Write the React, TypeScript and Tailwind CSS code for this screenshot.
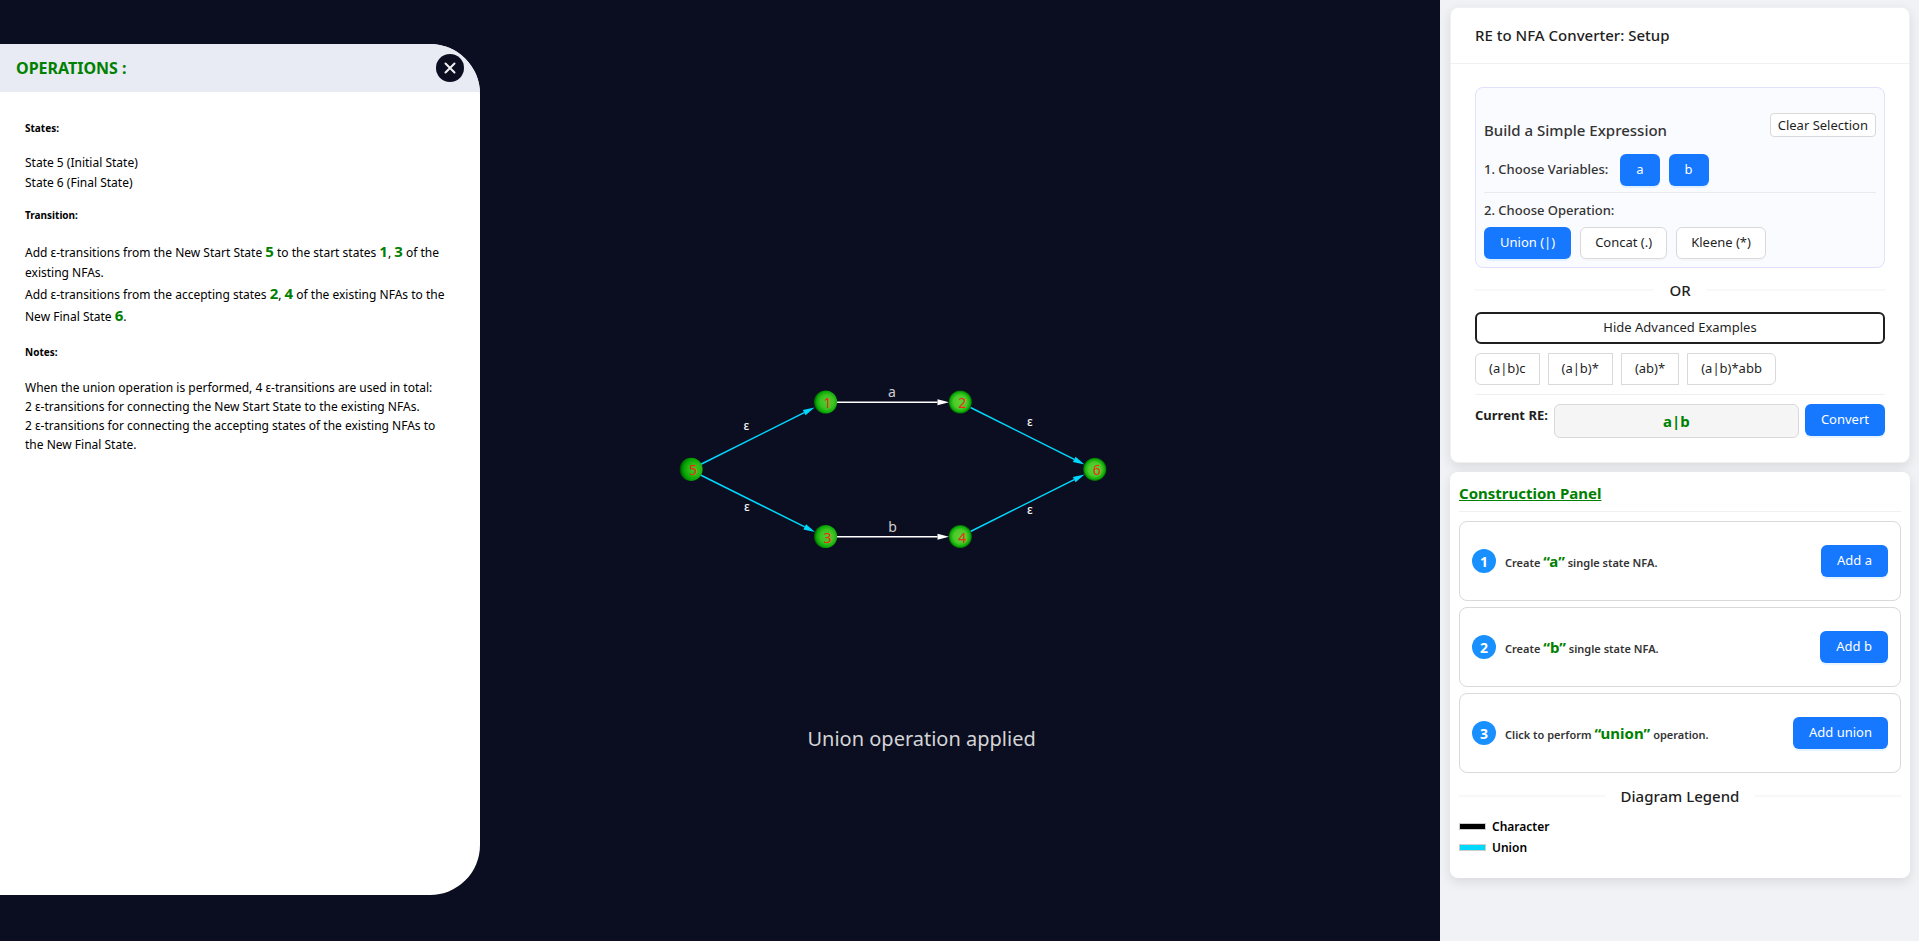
import React from "react";

const FONT = "font-['Noto_Sans','Open_Sans',sans-serif]";

const primaryButton =
  "flex h-8 items-center justify-center rounded-md bg-[#1677ff] px-4 text-[13px] text-white shadow-[0_2px_0_rgba(5,145,255,0.1)]";
const plainButton =
  "flex h-8 items-center justify-center rounded-md border border-[#d9d9d9] bg-white px-3.5 text-[13px] text-[#1f1f1f] shadow-[0_2px_0_rgba(0,0,0,0.02)]";
const exampleButton =
  "flex h-8 items-center justify-center border border-[#d9d9d9] bg-white px-[13px] text-[13px] text-[#1f1f1f] first:rounded-l-md last:rounded-r-md";

type GraphNode = { id: number; x: number; y: number; side: "left" | "mid" | "right" };

const nodes: GraphNode[] = [
  { id: 1, x: 825.5, y: 402, side: "mid" },
  { id: 2, x: 960.3, y: 402, side: "right" },
  { id: 3, x: 825.5, y: 536.5, side: "mid" },
  { id: 4, x: 960.3, y: 536.5, side: "right" },
  { id: 5, x: 691, y: 469.3, side: "left" },
  { id: 6, x: 1094.8, y: 469.3, side: "right" },
];

type Edge = { x1: number; y1: number; x2: number; y2: number; label: string; lx: number; ly: number };

const epsilonEdges: Edge[] = [
  { x1: 700.5, y1: 464.5, x2: 814.5, y2: 407.5, label: "ε", lx: 746.5, ly: 430 },
  { x1: 700.5, y1: 475, x2: 815, y2: 532, label: "ε", lx: 747, ly: 511 },
  { x1: 970.5, y1: 407.5, x2: 1084.5, y2: 464.5, label: "ε", lx: 1030, ly: 426 },
  { x1: 970.5, y1: 531.5, x2: 1084.5, y2: 474.5, label: "ε", lx: 1030, ly: 514 },
];

const characterEdges: Edge[] = [
  { x1: 837, y1: 402.3, x2: 949, y2: 402.3, label: "a", lx: 892, ly: 397 },
  { x1: 837, y1: 536.7, x2: 949, y2: 536.7, label: "b", lx: 892.5, ly: 532 },
];

function Arrow({ edge, color }: { edge: Edge; color: string }) {
  const length = Math.hypot(edge.x2 - edge.x1, edge.y2 - edge.y1);
  const ux = (edge.x2 - edge.x1) / length;
  const uy = (edge.y2 - edge.y1) / length;
  const bx = edge.x2 - ux * 11.5;
  const by = edge.y2 - uy * 11.5;
  const head = `${edge.x2},${edge.y2} ${bx - uy * 3},${by + ux * 3} ${bx + uy * 3},${by - ux * 3}`;
  return (
    <g>
      <line x1={edge.x1} y1={edge.y1} x2={bx} y2={by} stroke={color} strokeWidth="1.5" />
      <polygon points={head} fill={color} />
    </g>
  );
}

function Automaton() {
  return (
    <svg viewBox="0 0 1440 941" className="absolute inset-0 h-full w-full" role="img" aria-label="NFA for a|b">
      <defs>
        <radialGradient id="left" cx="0.66" cy="0.5" r="0.68">
          <stop offset="0" stopColor="#41c41f" />
          <stop offset="0.4" stopColor="#28b914" />
          <stop offset="0.7" stopColor="#04a303" />
          <stop offset="0.86" stopColor="#007402" />
          <stop offset="1" stopColor="#03140a" />
        </radialGradient>
        <radialGradient id="mid" cx="0.57" cy="0.5" r="0.59">
          <stop offset="0" stopColor="#55cb2c" />
          <stop offset="0.5" stopColor="#3cc222" />
          <stop offset="0.78" stopColor="#0aaa06" />
          <stop offset="1" stopColor="#003f04" />
        </radialGradient>
        <radialGradient id="right" cx="0.5" cy="0.5" r="0.52">
          <stop offset="0" stopColor="#5fd031" />
          <stop offset="0.55" stopColor="#4cc92a" />
          <stop offset="0.82" stopColor="#0eae08" />
          <stop offset="1" stopColor="#004a04" />
        </radialGradient>
      </defs>
      {epsilonEdges.map((edge) => (
        <Arrow key={`${edge.lx}-${edge.ly}`} edge={edge} color="#00d9ff" />
      ))}
      {characterEdges.map((edge) => (
        <Arrow key={edge.label} edge={edge} color="#ffffff" />
      ))}
      {[...epsilonEdges, ...characterEdges].map((edge) => (
        <text
          key={`${edge.lx}-${edge.ly}`}
          x={edge.lx}
          y={edge.ly}
          textAnchor="middle"
          className={edge.label === "ε" ? "fill-[#f2f2f2] text-[12px] font-medium" : "fill-[#cfcfd2] text-[14px]"}
        >
          {edge.label}
        </text>
      ))}
      {nodes.map((node) => (
        <g key={node.id}>
          <circle cx={node.x} cy={node.y} r="11.6" fill={`url(#${node.side})`} />
          <text x={node.x + 2} y={node.y + 6} textAnchor="middle" className="fill-[#f02a1c] text-[14px]">
            {node.id}
          </text>
        </g>
      ))}
    </svg>
  );
}

function Strong({ children }: { children: React.ReactNode }) {
  return <b className="text-[15px] leading-5 font-bold text-[#008000]">{children}</b>;
}

function OperationsPanel() {
  return (
    <aside className="absolute top-11 left-0 h-[851px] w-1/3 overflow-hidden rounded-r-[50px] bg-white text-black">
      <header className="flex h-12 items-center justify-between bg-[#e8ebf3] px-4">
        <h2 className="text-[16px] font-bold text-[#008000]">OPERATIONS :</h2>
        <button aria-label="Close" className="flex size-7 items-center justify-center rounded-full bg-[#0b0e20] text-white">
          <svg viewBox="0 0 12 12" className="size-3" fill="none" stroke="#f0f1f5" strokeWidth="2" strokeLinecap="round">
            <path d="M1.5 1.5 10.5 10.5M10.5 1.5 1.5 10.5" />
          </svg>
        </button>
      </header>
      <div className="px-[25px] pt-7 text-[12px] leading-5">
        <h3 className="text-[10px] leading-4 font-bold">States:</h3>
        <p className="mt-[17px]">
          State 5 (Initial State)
          <br />
          State 6 (Final State)
        </p>
        <h3 className="mt-3.5 text-[10px] leading-4 font-bold">Transition:</h3>
        <p className="mt-[18px]">
          Add ε-transitions from the New Start State <Strong>5</Strong> to the start states <Strong>1</Strong>,{" "}
          <Strong>3</Strong> of the existing NFAs.
          <br />
          Add ε-transitions from the accepting states <Strong>2</Strong>, <Strong>4</Strong> of the existing NFAs to the
          New Final State <Strong>6</Strong>.
        </p>
        <h3 className="mt-[17px] text-[10px] leading-4 font-bold">Notes:</h3>
        <p className="mt-[18px] leading-[19px]">
          When the union operation is performed, 4 ε-transitions are used in total:
          <br />
          2 ε-transitions for connecting the New Start State to the existing NFAs.
          <br />2 ε-transitions for connecting the accepting states of the existing NFAs to the New Final State.
        </p>
      </div>
    </aside>
  );
}

function TitledDivider({ children }: { children: React.ReactNode }) {
  return (
    <div className="flex items-center gap-4 text-[15px] leading-6 font-medium text-[#1f1f1f] before:h-0.5 before:flex-1 before:bg-[#f8f8f8] after:h-0.5 after:flex-1 after:bg-[#f8f8f8]">
      {children}
    </div>
  );
}

function SetupCard() {
  return (
    <section className="rounded-lg border border-[#f0f0f0] bg-white shadow-[0_4px_12px_rgba(0,0,0,0.1)]">
      <h2 className="flex h-14 items-center border-b border-[#f0f0f0] px-6 text-[15px] font-medium text-[#1f1f1f]">
        RE to NFA Converter: Setup
      </h2>
      <div className="px-6 pt-[23px] pb-6">
        <div className="rounded-lg border border-[#e0e0ff] bg-[#fafbff] px-2 pb-2 text-[#333333]">
          <div className="flex items-start justify-between pt-[25px]">
            <h3 className="pt-[5px] text-[15px] leading-6 font-medium">Build a Simple Expression</h3>
            <button className="h-6 rounded border border-[#d9d9d9] bg-white px-[7px] text-[13px] leading-5 text-[#1f1f1f]">
              Clear Selection
            </button>
          </div>
          <div className="mt-3 flex items-center gap-[9px]">
            <span className="mr-[3px] text-[13px] font-medium">1. Choose Variables:</span>
            <button className={primaryButton}>a</button>
            <button className={primaryButton}>b</button>
          </div>
          <hr className="mt-1.5 border-[#e9ebef]" />
          <div className="mt-1.5 text-[13px] leading-[22px] font-medium">2. Choose Operation:</div>
          <div className="mt-1.5 flex gap-[9px]">
            <button className={primaryButton}>Union (|)</button>
            <button className={plainButton}>Concat (.)</button>
            <button className={plainButton}>Kleene (*)</button>
          </div>
        </div>
        <div className="my-[10px]">
          <TitledDivider>OR</TitledDivider>
        </div>
        <button className="h-8 w-full rounded-md border-2 border-[#1f1f1f] bg-white text-[13px] text-[#1f1f1f]">
          Hide Advanced Examples
        </button>
        <div className="mt-[9px] flex gap-2">
          <button className={exampleButton}>(a|b)c</button>
          <button className={exampleButton}>(a|b)*</button>
          <button className={exampleButton}>(ab)*</button>
          <button className={exampleButton}>(a|b)*abb</button>
        </div>
        <hr className="mt-[9px] border-[#f0f0f0]" />
        <div className="mt-[9px] flex items-start gap-1.5">
          <label htmlFor="current-re" className="text-[13px] leading-[22px] font-bold text-[#1f1f1f]">
            Current RE:
          </label>
          <input
            id="current-re"
            readOnly
            defaultValue="a|b"
            className="h-[34px] min-w-0 flex-1 rounded-md border border-[#d9d9d9] bg-[#f5f5f5] text-center text-[15px] font-bold text-[#008000]"
          />
          <button className={primaryButton}>Convert</button>
        </div>
      </div>
    </section>
  );
}

const steps = [
  { before: "Create", term: "“a”", after: "single state NFA.", action: "Add a" },
  { before: "Create", term: "“b”", after: "single state NFA.", action: "Add b" },
  { before: "Click to perform", term: "“union”", after: "operation.", action: "Add union" },
];

function ConstructionCard() {
  return (
    <section className="mt-[9px] rounded-lg bg-white px-[9px] pt-[9px] pb-5 shadow-[0_4px_12px_rgba(0,0,0,0.1)]">
      <h2 className="text-[15px] leading-6 font-bold text-[#008000] underline">Construction Panel</h2>
      <hr className="mt-1.5 border-[#f0f0f0]" />
      <ol className="mt-[9px] flex flex-col gap-1.5">
        {steps.map((step, index) => (
          <li key={step.action} className="flex h-20 items-center rounded-lg border border-[#d9d9d9] px-3">
            <span className="flex size-6 items-center justify-center rounded-full bg-[#1890ff] text-[14px] font-bold text-white">
              {index + 1}
            </span>
            <p className="ml-[9px] flex-1 text-[11px] font-semibold text-[#333333]">
              {step.before} <span className="text-[15px] font-bold text-[#008000]">{step.term}</span> {step.after}
            </p>
            <button className={primaryButton}>{step.action}</button>
          </li>
        ))}
      </ol>
      <div className="mt-[11px]">
        <TitledDivider>Diagram Legend</TitledDivider>
      </div>
      <ul className="mt-2 text-[12px] leading-[21px] font-semibold text-black">
        <li className="flex items-center gap-1.5">
          <span className="h-[7px] w-[27px] border border-[#cccccc] bg-black" />
          Character
        </li>
        <li className="flex items-center gap-1.5">
          <span className="h-[7px] w-[27px] border border-[#cccccc] bg-[#00d9ff]" />
          Union
        </li>
      </ul>
    </section>
  );
}

export default function App() {
  return (
    <div className={`flex min-h-screen ${FONT}`}>
      <main className="relative min-w-0 flex-1 overflow-hidden bg-[#0b0e20]">
        <Automaton />
        <p className="absolute top-[724px] left-[64%] -translate-x-1/2 text-[20px] leading-[30px] whitespace-nowrap text-[#d4d4d6]">
          Union operation applied
        </p>
        <OperationsPanel />
      </main>
      <div className="w-1/4 max-w-[479px] bg-[#f0f2f5] pt-[7px] pr-[9px] pl-[10px]">
        <SetupCard />
        <ConstructionCard />
      </div>
    </div>
  );
}
